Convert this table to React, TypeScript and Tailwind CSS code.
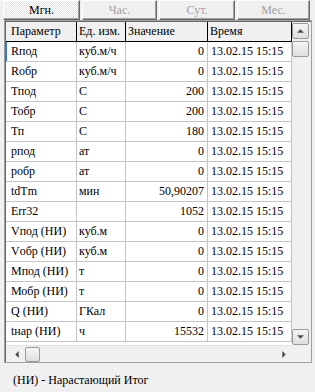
import React from 'react';

type Row = { name: string; unit: string; value: string };

const DATE = '13.02.15 15:15';

const ROWS: Row[] = [
  { name: 'Rпод', unit: 'куб.м/ч', value: '0' },
  { name: 'Rобр', unit: 'куб.м/ч', value: '0' },
  { name: 'Тпод', unit: 'С', value: '200' },
  { name: 'Тобр', unit: 'С', value: '200' },
  { name: 'Тп', unit: 'С', value: '180' },
  { name: 'рпод', unit: 'ат', value: '0' },
  { name: 'робр', unit: 'ат', value: '0' },
  { name: 'tdTm', unit: 'мин', value: '50,90207' },
  { name: 'Err32', unit: '', value: '1052' },
  { name: 'Vпод (НИ)', unit: 'куб.м', value: '0' },
  { name: 'Vобр (НИ)', unit: 'куб.м', value: '0' },
  { name: 'Мпод (НИ)', unit: 'т', value: '0' },
  { name: 'Мобр (НИ)', unit: 'т', value: '0' },
  { name: 'Q (НИ)', unit: 'ГКал', value: '0' },
  { name: 'tнар (НИ)', unit: 'ч', value: '15532' },
];

const TABS = [
  { label: 'Мгн.', w: 'w-[77px]', active: true },
  { label: 'Час.', w: 'w-[75px]', active: false },
  { label: 'Сут.', w: 'w-[76px]', active: false },
  { label: 'Мес.', w: 'w-[73px]', active: false },
];

const Tab: React.FC<{ label: string; w: string; active: boolean }> = ({ label, w, active }) => (
  <div
    className={`${w} h-[20px] flex items-center justify-center border border-t-white border-l-white border-b-[#696969] border-r-[#696969] shadow-[inset_-1px_-1px_0_#a0a0a0] leading-none ${
      active
        ? 'bg-[image:repeating-conic-gradient(#ffffff_0%_25%,#e4e4e4_0%_50%)] bg-[length:2px_2px] text-black'
        : 'bg-[#f0f0f0] text-[#a0a0a0]'
    }`}
  >
    {label}
  </div>
);

const Arrow: React.FC<{ dir: 'up' | 'down' | 'left' | 'right' }> = ({ dir }) => {
  const pts = {
    up: '0,4 4,0 8,4',
    down: '0,0 8,0 4,4',
    left: '4,0 4,8 0,4',
    right: '0,0 0,8 4,4',
  }[dir];
  const vertical = dir === 'up' || dir === 'down';
  return (
    <svg width={vertical ? 7 : 4} height={vertical ? 4 : 7} viewBox={vertical ? '0 0 8 4' : '0 0 4 8'}>
      <polygon points={pts} fill="#4d4d4d" />
    </svg>
  );
};

const ScrollBox: React.FC<{ className: string; children?: React.ReactNode }> = ({ className, children }) => (
  <div
    className={`${className} flex items-center justify-center rounded-[2px] border border-[#9a9a9a] bg-[linear-gradient(to_bottom,#f6f6f6,#dedede)]`}
  >
    {children}
  </div>
);

export default function App() {
  return (
    <div className="w-[315px] h-[392px] bg-[#f0f0f0] text-[12px] text-black font-['Liberation_Serif','Times_New_Roman',serif] overflow-hidden">
      {/* mode tabs */}
      <div className="flex gap-[2px] pl-[3px]">
        {TABS.map((t) => (
          <Tab key={t.label} {...t} />
        ))}
      </div>

      {/* grid */}
      <div className="ml-[4px] w-[308px] border border-[#a0a0a0] bg-white">
        <div className="flex flex-col border-l border-t border-[#696969]">
          <div className="flex">
            <div className="w-[286px] h-[323px] flex flex-col">
              <div className="flex h-[20px] bg-[#f0f0f0] border-b border-black leading-[19px]">
                <div className="w-[71px] pl-[5px] border-r border-black">Параметр</div>
                <div className="w-[49px] pl-[2px] border-r border-black whitespace-nowrap">Ед. изм.</div>
                <div className="w-[82px] pl-[2px] border-r border-black">Значение</div>
                <div className="w-[84px] pl-[2px] border-r border-black">Время</div>
              </div>
              {ROWS.map((r, i) => (
                <div key={r.name} className="flex h-[20px] border-b border-[#c4c4c4] leading-[19px] whitespace-nowrap">
                  <div
                    className={`w-[71px] pl-[4px] border-r border-[#c4c4c4] ${
                      i === 0 ? 'border-l border-l-[#3b7bd6]' : 'border-l border-l-transparent'
                    }`}
                  >
                    {r.name}
                  </div>
                  <div className="w-[49px] pl-[2px] border-r border-[#c4c4c4]">{r.unit}</div>
                  <div className="w-[82px] pr-[3px] text-right border-r border-[#c4c4c4]">{r.value}</div>
                  <div className="w-[84px] pl-[3px] border-r border-[#c4c4c4]">{DATE}</div>
                </div>
              ))}
            </div>

            {/* vertical scrollbar */}
            <div className="w-[19px] h-[323px] flex flex-col bg-[#f0f0f0] pt-[1px]">
              <ScrollBox className="w-[17px] h-[16px]">
                <Arrow dir="up" />
              </ScrollBox>
              <ScrollBox className="w-[17px] h-[16px] mt-[2px]" />
              <div className="flex-1" />
              <ScrollBox className="w-[17px] h-[16px]">
                <Arrow dir="down" />
              </ScrollBox>
            </div>
          </div>

          {/* horizontal scrollbar */}
          <div className="flex h-[17px]">
            <div className="w-[286px] flex items-center bg-[#f0f0f0] border-t border-[#e2e2e2]">
              <div className="w-[16px] flex justify-end pr-[3px]">
                <Arrow dir="left" />
              </div>
              <ScrollBox className="ml-[3px] w-[15px] h-[15px]" />
              <div className="flex-1" />
              <div className="w-[10px] flex">
                <Arrow dir="right" />
              </div>
            </div>
            <div className="w-[19px] bg-[#f0f0f0]" />
          </div>
        </div>
      </div>

      <div className="mt-[9px] pl-[13px] leading-[16px]">(НИ) - Нарастающий Итог</div>
    </div>
  );
}
